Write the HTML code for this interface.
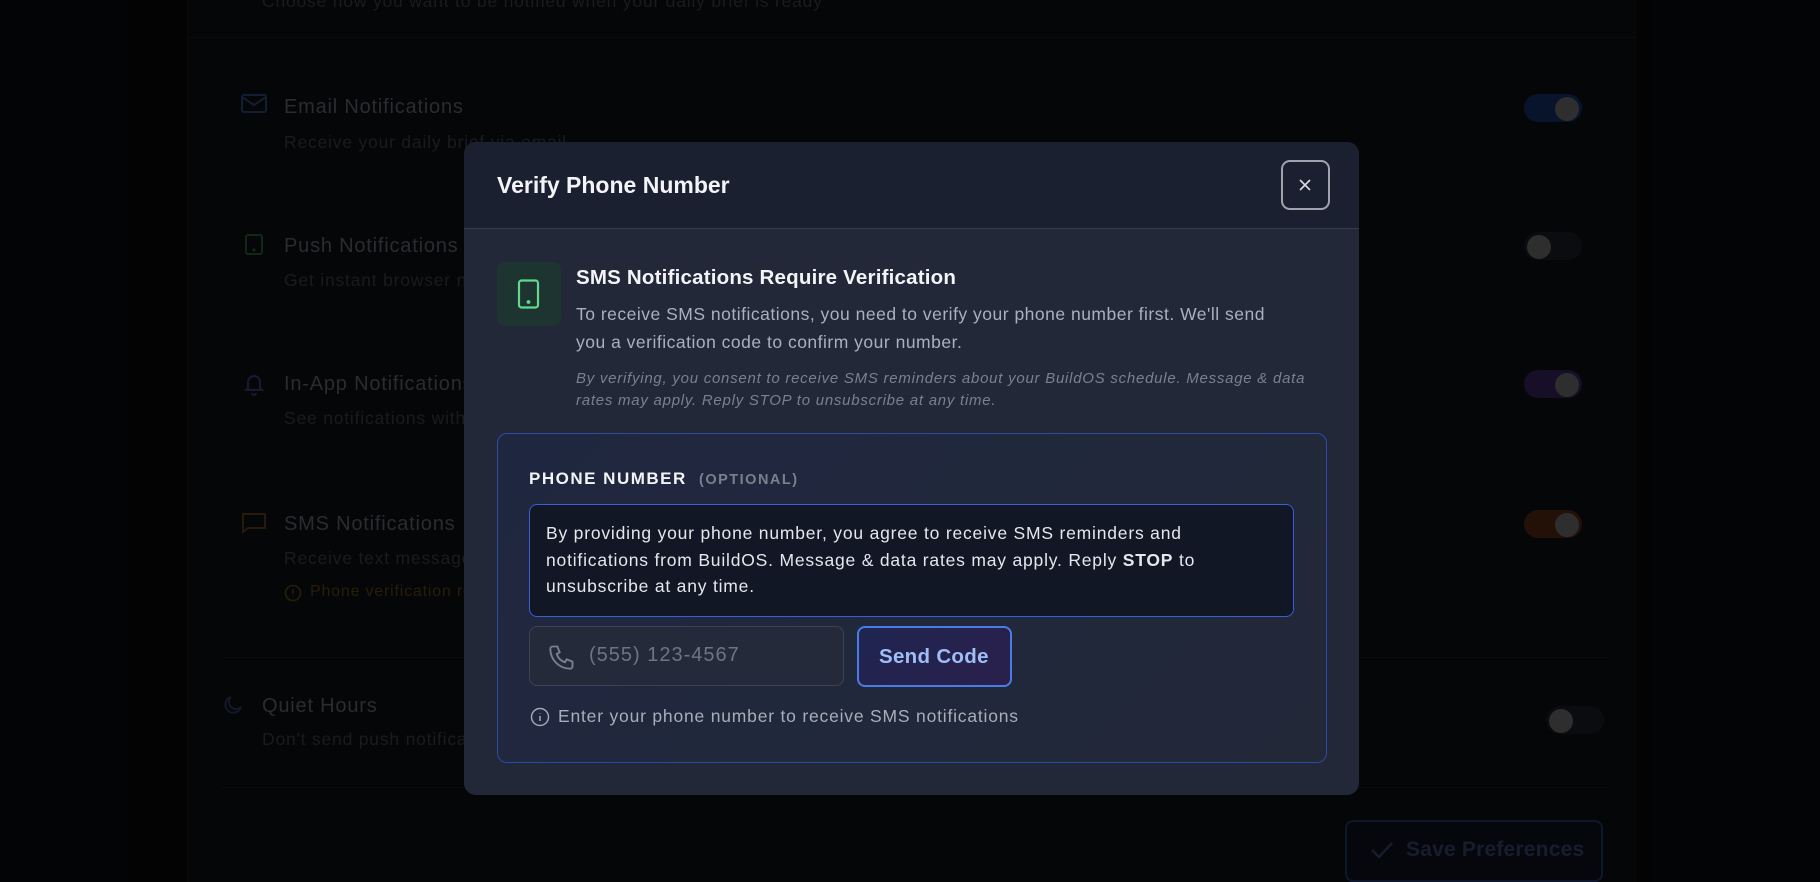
<!DOCTYPE html>
<html><head><meta charset="utf-8"><style>
*{box-sizing:border-box;margin:0;padding:0}
html,body{width:1820px;height:882px;overflow:hidden}
body{background:#060709;font-family:"Liberation Sans",sans-serif;position:relative}
.card{position:absolute;left:187px;top:-20px;width:1449px;height:902px;background:#0a0b0f;border-left:1px solid #101218;border-right:1px solid #101218}
.a{position:absolute;white-space:nowrap}
.t{color:#4d5058;font-size:20px;letter-spacing:.8px}
.d{color:#2f3238;font-size:17.5px;letter-spacing:.8px}
.hr{position:absolute;height:1px;background:#15171c}
.tg{position:absolute;width:58px;height:28px;border-radius:14px}
.tg i{position:absolute;top:3px;width:24px;height:24px;border-radius:50%;background:#555}
.ov{position:absolute;left:0;top:0;width:1820px;height:882px;background:rgba(0,0,0,.45)}
.modal{position:absolute;left:464px;top:142px;width:895px;height:653px;background:#222837;border-radius:12px;overflow:hidden}
.mh{position:absolute;left:0;top:0;width:100%;height:87px;background:#1b2030;border-bottom:1px solid #353b4a}
</style></head><body>
<div class="card"></div>
<div class="a d" style="left:262px;top:-9px">Choose how you want to be notified when your daily brief is ready</div>
<div class="hr" style="left:187px;top:37px;width:1449px"></div>

<svg class="a" style="left:241px;top:94px" width="26" height="20" viewBox="0 0 26 20" fill="none" stroke="#24375c" stroke-width="2"><rect x="1" y="1" width="24" height="17" rx="2"/><path d="M1 3l12 8 12-8"/></svg>
<div class="a t" style="left:284px;top:96px">Email Notifications</div>
<div class="a d" style="left:284px;top:132px">Receive your daily brief via email</div>
<div class="tg" style="left:1524px;top:94px;background:#0f2350"><i style="left:31px"></i></div>

<svg class="a" style="left:244px;top:234px" width="20" height="22" viewBox="0 0 20 22" fill="none" stroke="#1f4a2a" stroke-width="2"><rect x="2" y="1" width="16" height="19" rx="2"/><circle cx="10" cy="16" r=".6" fill="#1f4a2a"/></svg>
<div class="a t" style="left:284px;top:235px">Push Notifications</div>
<div class="a d" style="left:284px;top:270px">Get instant browser notifications</div>
<div class="tg" style="left:1524px;top:232px;background:#15171c"><i style="left:3px"></i></div>

<svg class="a" style="left:242px;top:372px" width="24" height="24" viewBox="0 0 24 24" fill="none" stroke="#3a2a5a" stroke-width="2"><path d="M6 16V10a6 6 0 0 1 12 0v6l2 2H4z"/><path d="M10 21a2 2 0 0 0 4 0"/></svg>
<div class="a t" style="left:284px;top:373px">In-App Notifications</div>
<div class="a d" style="left:284px;top:408px">See notifications within the app</div>
<div class="tg" style="left:1524px;top:370px;background:#2a1a48"><i style="left:31px"></i></div>

<svg class="a" style="left:241px;top:512px" width="26" height="22" viewBox="0 0 26 22" fill="none" stroke="#4a2e18" stroke-width="2"><path d="M2 2h22v14H7l-5 4z"/></svg>
<div class="a t" style="left:284px;top:513px">SMS Notifications</div>
<div class="a d" style="left:284px;top:548px">Receive text messages</div>
<svg class="a" style="left:284px;top:584px" width="18" height="18" viewBox="0 0 18 18" fill="none" stroke="#4a3810" stroke-width="1.6"><circle cx="9" cy="9" r="7.5"/><path d="M9 5v5M9 12.5v.5"/></svg>
<div class="a" style="left:310px;top:583px;font-size:16px;letter-spacing:.8px;color:#4a3810">Phone verification required</div>
<div class="tg" style="left:1524px;top:510px;background:#40200f"><i style="left:31px"></i></div>

<div class="hr" style="left:222px;top:657px;width:1386px"></div>
<svg class="a" style="left:221px;top:693px" width="24" height="24" viewBox="0 0 24 24" fill="none" stroke="#252a4a" stroke-width="2"><path d="M20 14A8 8 0 1 1 10 4a7 7 0 0 0 10 10z"/></svg>
<div class="a t" style="left:262px;top:695px">Quiet Hours</div>
<div class="a d" style="left:262px;top:729px">Don't send push notifications during these hours</div>
<div class="tg" style="left:1546px;top:706px;background:#15171c"><i style="left:3px"></i></div>
<div class="hr" style="left:222px;top:787px;width:1386px"></div>

<div class="a" style="left:1345px;top:820px;width:258px;height:62px;border:2px solid #1a2a50;border-radius:8px;background:#0c0e18"></div>
<svg class="a" style="left:1370px;top:840px" width="24" height="20" viewBox="0 0 24 20" fill="none" stroke="#2a3550" stroke-width="2.4"><path d="M2 10l7 7L22 3"/></svg>
<div class="a" style="left:1406px;top:838px;font-size:21px;font-weight:bold;letter-spacing:.2px;color:#2a3550">Save Preferences</div>
<div class="ov"></div>

<div class="modal">
 <div class="mh"></div>
 <div class="a" style="left:33px;top:30px;font-size:23px;font-weight:bold;color:#f2f4f8">Verify Phone Number</div>
 <div class="a" style="left:817px;top:18px;width:49px;height:50px;border:2px solid #9ea3ad;border-radius:9px"></div>
 <svg class="a" style="left:833px;top:35px" width="16" height="16" viewBox="0 0 16 16" stroke="#d8dbe0" stroke-width="1.6"><path d="M3 3l10 10M13 3L3 13"/></svg>

 <div class="a" style="left:33px;top:120px;width:64px;height:64px;border-radius:8px;background:#1e3430"></div>
 <svg class="a" style="left:52px;top:137px" width="26" height="30" viewBox="0 0 26 30" fill="none" stroke="#5fd98a" stroke-width="2.2"><rect x="3" y="1.5" width="19" height="27" rx="2.5"/><circle cx="12.5" cy="23" r=".8" fill="#5fd98a"/></svg>
 <div class="a" style="left:112px;top:124px;font-size:20.5px;font-weight:bold;letter-spacing:.2px;color:#f2f4f8">SMS Notifications Require Verification</div>
 <div class="a" style="left:112px;top:158px;font-size:17.5px;line-height:28px;letter-spacing:.5px;color:#aab0bc">To receive SMS notifications, you need to verify your phone number first. We'll send<br>you a verification code to confirm your number.</div>
 <div class="a" style="left:112px;top:226px;font-size:15px;line-height:22px;font-style:italic;letter-spacing:.75px;color:#7a808d">By verifying, you consent to receive SMS reminders about your BuildOS schedule. Message &amp; data<br>rates may apply. Reply STOP to unsubscribe at any time.</div>

 <div class="a" style="left:33px;top:291px;width:830px;height:330px;border:1.5px solid #2c4aa8;border-radius:10px;background:linear-gradient(135deg,#1f2740,#222838)"></div>
 <div class="a" style="left:65px;top:327px;font-size:17px;font-weight:bold;letter-spacing:1.5px;color:#f2f4f8">PHONE NUMBER <span style="font-size:14.5px;font-weight:bold;color:#7a808d;margin-left:6px">(OPTIONAL)</span></div>
 <div class="a" style="left:65px;top:362px;width:765px;height:113px;border:1.5px solid #3a5ed6;border-radius:8px;background:#121726"></div>
 <div class="a" style="left:82px;top:378px;font-size:17.5px;line-height:26.5px;color:#e4e7ec;letter-spacing:.8px">By providing your phone number, you agree to receive SMS reminders and<br>notifications from BuildOS. Message &amp; data rates may apply. Reply <b>STOP</b> to<br>unsubscribe at any time.</div>
 <div class="a" style="left:65px;top:484px;width:315px;height:60px;border:1.5px solid #3c4250;border-radius:8px;background:#242a39"></div>
 <svg class="a" style="left:84px;top:500px" width="28" height="30" viewBox="0 0 24 24" fill="none" stroke="#7a808c" stroke-width="1.6"><path d="M4 3h4l2 5-2.5 1.5a11 11 0 0 0 7 7L16 14l5 2v4a2 2 0 0 1-2 2A17 17 0 0 1 2 5a2 2 0 0 1 2-2z"/></svg>
 <div class="a" style="left:125px;top:502px;font-size:20px;letter-spacing:1px;color:#6e7480">(555) 123-4567</div>
 <div class="a" style="left:393px;top:484px;width:155px;height:61px;border:2px solid #4b7be6;border-radius:8px;background:linear-gradient(135deg,#1f2550,#2a1f4c)"></div>
 <div class="a" style="left:415px;top:503px;font-size:20.5px;font-weight:bold;letter-spacing:.3px;color:#9fbef6">Send Code</div>
 <svg class="a" style="left:66px;top:565px" width="20" height="20" viewBox="0 0 20 20" fill="none" stroke="#a0a6b2" stroke-width="1.5"><circle cx="10" cy="10" r="8.5"/><path d="M10 9v5M10 6v.5"/></svg>
 <div class="a" style="left:94px;top:564px;font-size:17.5px;letter-spacing:.8px;color:#a8aeb9">Enter your phone number to receive SMS notifications</div>
</div>
</body></html>
